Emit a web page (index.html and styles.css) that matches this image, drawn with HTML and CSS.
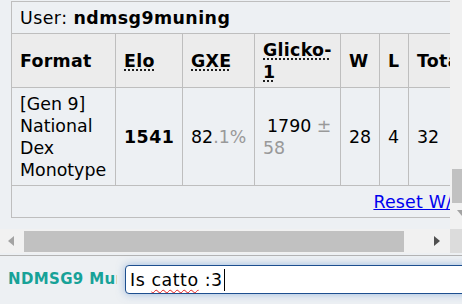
FILE: index.html
```html
<!DOCTYPE html>
<html>
<head>
<meta charset="utf-8">
<link rel="stylesheet" href="styles.css">
</head>
<body>
<div class="page">
  <div class="scrollarea">
    <div class="content">
      <table class="ranks">
        <colgroup>
          <col class="c-format"><col class="c-elo"><col class="c-gxe"><col class="c-glicko"><col class="c-w"><col class="c-l"><col class="c-total">
        </colgroup>
        <tr class="caption-row"><td colspan="7">User: <strong>ndmsg9muning</strong></td></tr>
        <tr class="head-row">
          <th>Format</th>
          <th><abbr>Elo</abbr></th>
          <th><abbr>GXE</abbr></th>
          <th><abbr>Glicko-1</abbr></th>
          <th>W</th>
          <th>L</th>
          <th>Total</th>
        </tr>
        <tr class="data-row">
          <td>[Gen 9] National Dex Monotype</td>
          <td><strong>1541</strong></td>
          <td>82<span class="dim">.1%</span></td>
          <td><span class="glicko">1790</span><span class="dim"> ± 58</span></td>
          <td>28</td>
          <td>4</td>
          <td>32</td>
        </tr>
        <tr class="foot-row"><td colspan="7"><a href="#">Reset W/L</a></td></tr>
      </table>
    </div>
    <div class="vbar">
      <div class="vtrack"></div>
      <div class="vthumb"></div>
      <div class="vgap"></div>
      <div class="vdown"><span class="tri-down"></span></div>
      <div class="vrest"></div>
    </div>
  </div>
  <div class="hbar">
    <div class="hbtn"><span class="tri-left"></span></div>
    <div class="htrack"><div class="hthumb"></div></div>
    <div class="hbtn hbtn-r"><span class="tri-right"></span></div>
    <div class="corner"></div>
  </div>
  <div class="divider"></div>
  <div class="chatbar">
    <div class="name">NDMSG9 Muning</div>
    <div class="textbox"><span class="typed">Is <span class="misspelled">catto</span> :3</span><span class="caret"></span></div>
  </div>
</div>
</body>
</html>
```

FILE: styles.css
```css
html, body {
  margin: 0;
  padding: 0;
}
body {
  background: #edf0f3;
  font-family: "DejaVu Sans", Verdana, sans-serif;
  font-size: 17.4px;
  line-height: 22px;
  color: #000;
  width: 462px;
  height: 304px;
  overflow: hidden;
}
.page {
  display: flex;
  flex-direction: column;
  width: 462px;
  height: 304px;
}
.scrollarea {
  display: flex;
  height: 229px;
  flex: none;
}
.content {
  width: 450px;
  overflow: hidden;
  padding: 1px 0 0 11px;
  box-sizing: border-box;
  flex: none;
}
.ranks {
  border-collapse: collapse;
  table-layout: fixed;
  width: 458px;
}
.c-format { width: 104px; }
.c-elo { width: 67px; }
.c-gxe { width: 72px; }
.c-glicko { width: 86px; }
.c-w { width: 39px; }
.c-l { width: 29px; }
.c-total { width: 61px; }
.ranks td, .ranks th {
  border: 1px solid #bebebe;
  padding: 5px 7px 4px 8px;
  vertical-align: middle;
  text-align: left;
}
.ranks th {
  background: #ececec;
  font-weight: bold;
  white-space: nowrap;
  letter-spacing: 0.3px;
}
.ranks th abbr {
  text-decoration: underline dotted;
  text-underline-offset: 3px;
  white-space: normal;
}
.head-row th:nth-child(4) {
  white-space: normal;
}
.caption-row td {
  letter-spacing: 0.45px;
}
.data-row strong {
  letter-spacing: 0.5px;
}
.dim {
  color: #999;
}
.glicko {
  margin-left: 4px;
}
.foot-row td {
  text-align: right;
  white-space: nowrap;
}
.foot-row a {
  color: #0000ee;
  text-decoration: underline;
  letter-spacing: 0.2px;
}
.vbar {
  width: 22px;
  flex: none;
  display: flex;
  flex-direction: column;
  background: #f1f1f1;
  padding-left: 2px;
  box-sizing: border-box;
}
.vtrack { height: 169px; }
.vthumb { height: 34px; background: #c1c1c1; }
.vgap { height: 4px; }
.vdown {
  height: 16px;
  display: flex;
  justify-content: center;
  padding-top: 3px;
  box-sizing: border-box;
}
.tri-down {
  width: 0; height: 0;
  border-left: 5px solid transparent;
  border-right: 5px solid transparent;
  border-top: 6px solid #a3a3a3;
}
.hbar {
  display: flex;
  height: 24px;
  background: #f1f1f1;
  flex: none;
}
.hbtn {
  width: 24px;
  display: flex;
  align-items: center;
  padding-left: 8px;
  box-sizing: border-box;
  flex: none;
}
.hbtn-r {
  width: 46px;
  padding-left: 30px;
}
.tri-left {
  width: 0; height: 0;
  border-top: 5px solid transparent;
  border-bottom: 5px solid transparent;
  border-right: 6px solid #a3a3a3;
}
.tri-right {
  width: 0; height: 0;
  border-top: 5px solid transparent;
  border-bottom: 5px solid transparent;
  border-left: 6px solid #505050;
}
.htrack {
  width: 380px;
  padding: 2px 0 1px;
  box-sizing: border-box;
  display: flex;
  flex: none;
}
.hthumb {
  flex: 1;
  background: #c1c1c1;
}
.corner {
  flex: 1;
  background: #dcdcdc;
}
.divider {
  height: 1px;
  margin-top: 2px;
  background: #b4b4b4;
  flex: none;
}
.chatbar {
  flex: 1;
  display: flex;
  align-items: center;
  padding: 0 0 2px 8px;
  gap: 8px;
}
.name {
  width: 109px;
  overflow: hidden;
  white-space: nowrap;
  font-weight: bold;
  font-size: 15px;
  letter-spacing: 0.35px;
  color: #17a298;
  flex: none;
}
.textbox {
  flex: none;
  width: 350px;
  height: 29px;
  box-sizing: border-box;
  background: #fff;
  border: 1px solid #1d4f8f;
  border-radius: 4px;
  box-shadow: 0 0 9px rgba(90, 140, 205, 0.55);
  padding: 3px 0 0 4px;
  display: flex;
  align-items: flex-start;
  white-space: nowrap;
}
.typed {
  letter-spacing: 0.55px;
}
.misspelled {
  text-decoration: underline wavy #e02020;
  text-decoration-thickness: 1px;
  text-underline-offset: 3px;
}
.caret {
  width: 1px;
  height: 22px;
  background: #000;
  margin-left: 1px;
}
```
